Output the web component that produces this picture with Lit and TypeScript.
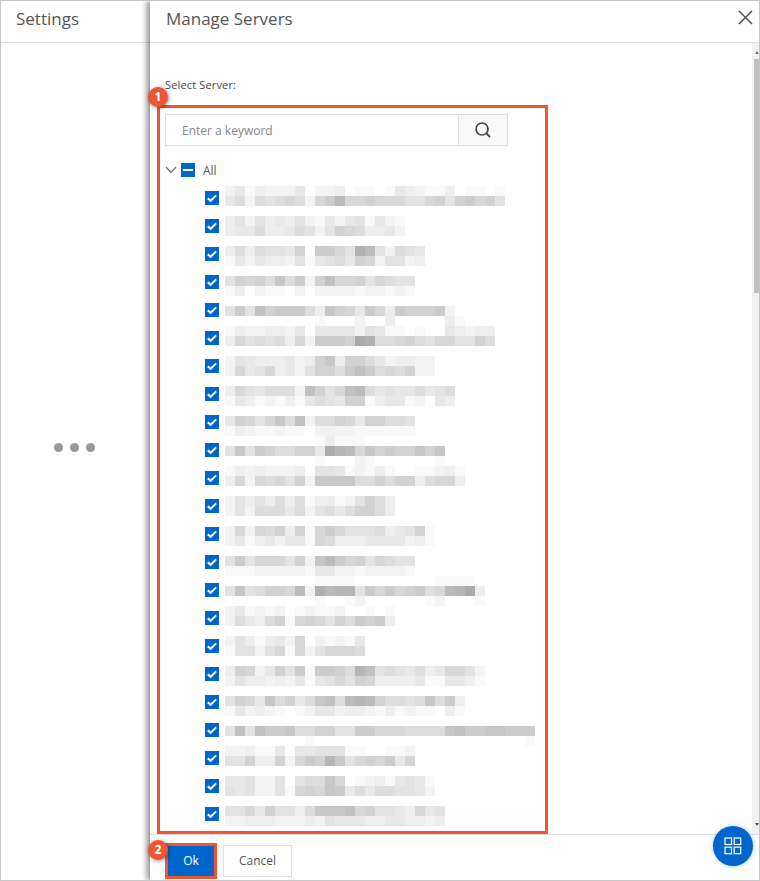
import { LitElement, html, css, svg } from "lit";
import { customElement } from "lit/decorators.js";

// Each redacted row: absolute top (y) of its mosaic, then lines of cells (hex = darkness).
const ROWS: [number, string[]][] = [
  [186, ["2413222402230110143211301101", "46265676279c77877755785897 85".replace(/ /g, "")]],
  [216, ["352534352142451421", "344633465258763342"]],
  [246, ["36365548099 75ec5265 4".replace(/ /g, ""), "14243325145648725 523".replace(/ /g, "")]],
  [276, ["5878 6a69 28b7 7857 655".replace(/ /g, ""), "1302110202222122121"]],
  [306, ["59 5b899 9 63a8 7497 3988 892".replace(/ /g, ""), "00000000010002003000 0031".replace(/ /g, "")]],
  [326, ["132233240444 42541 10100 43233".replace(/ /g, ""), "37565637 2999 8fe6 6786 5775 586".replace(/ /g, "")]],
  [356, ["254333 42 38a3 8864 23322".replace(/ /g, ""), "27457342 5886 9b96 76822".replace(/ /g, "")]],
  [386, ["37546662 b857 bc64 5446 456".replace(/ /g, ""), "14312131 4654 8813 4412 043".replace(/ /g, "")]],
  [416, ["4875 7a6b 2668 7488 665".replace(/ /g, ""), "1321 1211 0222 2111 111".replace(/ /g, "")]],
  [436, ["0000 0000 0131 1100 0000 00".replace(/ /g, ""), "5a59 8668 84fd c7a8 988a 8a".replace(/ /g, ""), "0000 0000 0100 0210 0000 01".replace(/ /g, "")]],
  [466, ["13232223 0554 1213 1001 1231".replace(/ /g, ""), "37276758 2aaa a668 6883 6773".replace(/ /g, "")]],
  [496, ["25353636 1331 2586 3".replace(/ /g, ""), "25266646 2564 6886 3".replace(/ /g, "")]],
  [526, ["27276838 1797 5556 345 81".replace(/ /g, ""), "24134244 1763 3344 4423 1".replace(/ /g, "")]],
  [556, ["5957 7758 2ac9 7857 655".replace(/ /g, ""), "1112 2222 1442 2122 221".replace(/ /g, "")]],
  [576, ["0000 0000 0111 1000 0000 0111 10".replace(/ /g, ""), "5a56 887c 2ecd d597 9789 67cd f3".replace(/ /g, ""), "0000 0000 0100 1200 0000 1200 01".replace(/ /g, "")]],
  [606, ["24121201 2112 0010 1".replace(/ /g, ""), "26436817 8758 6989 3".replace(/ /g, "")]],
  [636, ["25313427 0212 14".replace(/ /g, ""), "15525717 2577 76".replace(/ /g, "")]],
  [666, ["38724859 1998 6db5 6546 3477 52".replace(/ /g, ""), "25332324 1457 5873 3334 1144 31".replace(/ /g, "")]],
  [696, ["58 7 4a684 6ab6 cdc8 6656 a693".replace(/ /g, ""), "14232101 2442 3321 3121 1031".replace(/ /g, "")]],
  [726, ["5b5b99a6 6885 5997 7766 66ab 99aa 999".replace(/ /g, ""), "0000 0000 1000 0000 0000 0000 0000 001".replace(/ /g, "")]],
  [746, ["22311404 4555 1100 112".replace(/ /g, ""), "55833827 98da 5787 947".replace(/ /g, "")]],
  [776, ["44522505 66a7 0123 1454 1".replace(/ /g, ""), "54522517 87a9 4646 6554 2".replace(/ /g, "")]],
  [806, ["55748553 6aaa b785 5437 45".replace(/ /g, ""), "22333222 3254 4433 4433 23".replace(/ /g, "")]],
];

const CELL = 10;
const FIRST_CHECK_Y = 191;
const ROW_STEP = 28;

function grey(c: string): string {
  const v = Math.max(0, 255 - parseInt(c, 16) * 5.6) | 0;
  return `rgb(${v},${v},${v})`;
}

function mosaic(lines: string[]) {
  const w = Math.max(...lines.map((l) => l.length)) * CELL;
  const h = lines.length * CELL;
  return html`<svg class="mosaic" width=${w} height=${h} viewBox="0 0 ${w} ${h}" shape-rendering="crispEdges">
    ${lines.map((line, r) =>
      [...line].map((c, i) => svg`<rect x=${i * CELL} y=${r * CELL} width=${CELL} height=${CELL} fill=${grey(c)}></rect>`)
    )}
  </svg>`;
}

const check = html`<span class="cb"><svg width="14" height="14" viewBox="0 0 14 14"><path d="M2.8 7.2 L5.6 9.8 L11.2 4.4" fill="none" stroke="#fff" stroke-width="2"/></svg></span>`;

@customElement("app-root")
export class AppRoot extends LitElement {
  static styles = css`
    :host {
      display: block;
      width: 760px;
      height: 881px;
      box-sizing: border-box;
      border: 1px solid #c6c6c6;
      font-family: "Open Sans", "Noto Sans", sans-serif;
      color: #333;
      background: #fff;
      overflow: hidden;
      position: relative;
    }
    .page { display: flex; height: 100%; }
    .side { width: 149px; flex: none; display: flex; flex-direction: column; }
    .title {
      height: 41px;
      flex: none;
      box-sizing: border-box;
      border-bottom: 1px solid #dedede;
      font-size: 17px;
      line-height: 36px;
      color: #555;
      display: flex;
      align-items: flex-start;
      justify-content: space-between;
    }
    .side .title { padding-left: 15px; height: 42px; }
    .loading { flex: 1; display: flex; align-items: center; justify-content: center; gap: 7px; padding: 0 2px 28px 0; }
    .dot { width: 9px; height: 9px; border-radius: 50%; background: #999; }
    .drawer {
      flex: 1;
      min-width: 0;
      display: flex;
      flex-direction: column;
      background: #fff;
      box-shadow: -3px 0 6px rgba(0, 0, 0, 0.45);
      position: relative;
    }
    .drawer .title { padding: 0 6px 0 16px; height: 42px; }
    .close { margin-top: 8px; }
    .main { flex: 1; display: flex; min-height: 0; }
    .content { flex: 1; min-width: 0; padding: 0 0 0 7px; }
    .label { margin: 33px 0 0 8px; height: 29px; font-size: 11px; line-height: 18px; color: #444; letter-spacing: 0.15px; }
    .box {
      width: 391px;
      height: 729px;
      box-sizing: border-box;
      border: 3px solid #ef5533;
      padding: 6px 0 0 5px;
      overflow: hidden;
    }
    .search { display: flex; width: 343px; height: 32px; box-sizing: border-box; border: 1px solid #ddd; }
    .search .input { flex: 1; padding-left: 16px; font-size: 12px; line-height: 32px; color: #888; }
    .search .btn { width: 49px; box-sizing: border-box; border-left: 1px solid #ddd; background: #f9f9f9; display: flex; align-items: center; justify-content: center; }
    .all { display: flex; align-items: center; height: 14px; margin-top: 17px; font-size: 12px; color: #555; }
    .all .chev { width: 16px; }
    .all .lbl { margin-left: 8px; }
    .cb { width: 14px; height: 14px; flex: none; background: #0066cc; display: block; }
    .cb svg { display: block; }
    .minus { display: flex; align-items: center; justify-content: center; }
    .minus i { width: 10px; height: 2px; background: #fff; display: block; }
    .list { margin-top: 14px; }
    .row { display: flex; height: 28px; padding-left: 40px; gap: 6px; align-items: flex-start; }
    .mosaic { display: block; flex: none; }
    .track { width: 7px; flex: none; background: #f1f1f1; padding-top: 16px; box-sizing: border-box; position: relative; }
    .thumb { width: 5px; height: 234px; margin-left: 2px; background: #c1c1c1; }
    .arrow { position: absolute; right: 0; width: 0; height: 0; border-left: 2px solid transparent; border-right: 2px solid transparent; }
    .arrow.up { top: 8px; border-bottom: 3px solid #777; }
    .arrow.down { bottom: 8px; border-top: 3px solid #555; }
    .foot { height: 46px; flex: none; border-top: 1px solid #dedede; padding: 8px 0 0 15px; display: flex; gap: 6px; align-items: flex-start; box-sizing: border-box; }
    .ok {
      width: 52px; height: 36px; box-sizing: border-box; border: 3px solid #ef5533;
      background: #0066cc; color: #fff; font-size: 12px; text-align: center; line-height: 30px;
    }
    .cancel {
      width: 69px; height: 32px; margin-top: 2px; box-sizing: border-box; border: 1px solid #ddd;
      font-size: 12px; color: #555; text-align: center; line-height: 30px; background: #fff;
    }
    .badge {
      position: absolute; width: 20px; height: 20px; border-radius: 50%; background: #ef5533; color: #fff;
      font-size: 12px; font-weight: 700; line-height: 20px; text-align: center;
      box-shadow: 1px 1px 4px rgba(0, 0, 0, 0.45); z-index: 3;
    }
    .b1 { left: 147px; top: 86px; }
    .b2 { left: 147px; top: 839px; }
    .fab {
      position: absolute; left: 712px; top: 825px; width: 40px; height: 40px; border-radius: 50%;
      background: #0066cc; display: flex; align-items: center; justify-content: center;
      box-shadow: 0 0 4px rgba(0, 102, 204, 0.4); z-index: 3;
    }
    .fab svg { display: block; }
  `;

  render() {
    return html`
      <div class="page">
        <aside class="side">
          <div class="title">Settings</div>
          <div class="loading"><span class="dot"></span><span class="dot"></span><span class="dot"></span></div>
        </aside>
        <section class="drawer">
          <header class="title">
            <span>Manage Servers</span>
            <svg class="close" width="16" height="16" viewBox="0 0 16 16"><path d="M2 2 L15 15 M15 2 L2 15" stroke="#555" stroke-width="1.6" fill="none"/></svg>
          </header>
          <div class="main">
            <div class="content">
              <div class="label">Select Server:</div>
              <div class="box">
                <div class="search">
                  <div class="input">Enter a keyword</div>
                  <div class="btn">
                    <svg width="18" height="18" viewBox="0 0 18 18"><circle cx="8" cy="8" r="6" fill="none" stroke="#444" stroke-width="1.7"/><path d="M12.4 12.4 L16 16" stroke="#444" stroke-width="1.9" fill="none"/></svg>
                  </div>
                </div>
                <div class="all">
                  <svg class="chev" width="16" height="14" viewBox="0 0 16 14"><path d="M1 4 L6 9.5 L11 4" fill="none" stroke="#777" stroke-width="1.3"/></svg>
                  <span class="cb minus"><i></i></span>
                  <span class="lbl">All</span>
                </div>
                <div class="list">
                  ${ROWS.map(
                    ([y, lines], i) => html`<div class="row">
                      ${check}
                      <div style="margin-top:${y - (FIRST_CHECK_Y + i * ROW_STEP)}px">${mosaic(lines)}</div>
                    </div>`
                  )}
                </div>
              </div>
            </div>
            <div class="track">
              <span class="arrow up"></span>
              <div class="thumb"></div>
              <span class="arrow down"></span>
            </div>
          </div>
          <footer class="foot">
            <div class="ok">Ok</div>
            <div class="cancel">Cancel</div>
          </footer>
        </section>
      </div>
      <span class="badge b1">1</span>
      <span class="badge b2">2</span>
      <div class="fab">
        <svg width="18" height="18" viewBox="0 0 18 18"><g fill="none" stroke="#fff" stroke-width="1.2"><rect x="1" y="1" width="6.5" height="6.5"/><rect x="10.2" y="1" width="6.5" height="6.5"/><rect x="1" y="10.2" width="6.5" height="6.5"/><rect x="10.2" y="10.2" width="6.5" height="6.5"/></g></svg>
      </div>
    `;
  }
}
